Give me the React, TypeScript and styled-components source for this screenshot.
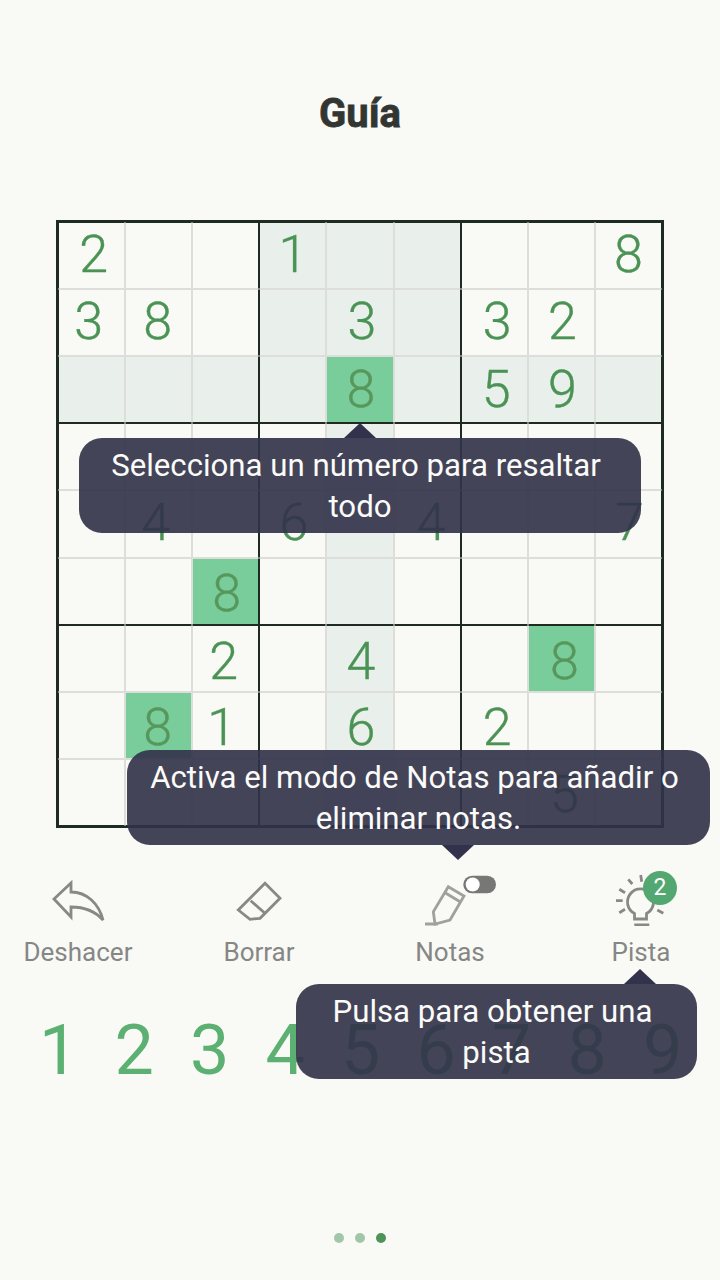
import React from "react";
import styled, { createGlobalStyle } from "styled-components";

const GlobalStyle = createGlobalStyle`
    html, body {
        margin: 0;
        padding: 0;
        background: #f9faf5;
        font-family: Roboto, "Liberation Sans", sans-serif;
    }
`;

const Page = styled.div`
    position: relative;
    width: 720px;
    height: 1280px;
    overflow: hidden;
    background: #f9faf5;
`;

const Title = styled.h1`
    margin: 0;
    padding-top: 90px;
    height: 130px;
    line-height: 48px;
    font-size: 40px;
    font-weight: 700;
    text-align: center;
    color: #333533;
    -webkit-text-stroke: 0.8px #333533;
`;

const Board = styled.div`
    box-sizing: border-box;
    width: 608px;
    height: 608px;
    margin: 0 auto;
    border: 2px solid #1f2b22;
    display: grid;
    grid-template-columns: repeat(9, 1fr);
    grid-template-rows: repeat(9, 1fr);
`;

const line = "#dddeda";
const heavy = "#1f2b22";

const Cell = styled.div<{ $row: number; $col: number; $tone: string; $dx: number; $dy: number }>`
    box-sizing: border-box;
    display: flex;
    align-items: center;
    justify-content: center;
    padding: ${(p) => Math.max(p.$dy, 0) * 2}px ${(p) => Math.max(-p.$dx, 0) * 2}px
        ${(p) => Math.max(-p.$dy, 0) * 2}px ${(p) => Math.max(p.$dx, 0) * 2}px;
    font-size: 52px;
    font-weight: 300;
    line-height: 1;
    -webkit-text-stroke: 0.4px currentColor;
    color: ${(p) => (p.$tone === "active" ? "#57975c" : "#4a9355")};
    background: ${(p) =>
        p.$tone === "active" ? "#79cd9b" : p.$tone === "soft" ? "#e9efeb" : "transparent"};
    border-left: 1px solid ${(p) => (p.$col % 3 === 0 ? heavy : line)};
    border-right: 1px solid ${(p) => (p.$col % 3 === 2 ? heavy : line)};
    border-top: 1px solid ${(p) => (p.$row % 3 === 0 ? heavy : line)};
    border-bottom: 1px solid ${(p) => (p.$row % 3 === 2 ? heavy : line)};
`;

const Toolbar = styled.div`
    display: flex;
    padding: 46px 0 0 23px;
`;

const Tool = styled.div<{ $gap: number }>`
    position: relative;
    width: 110px;
    margin-left: ${(p) => p.$gap}px;
    display: flex;
    flex-direction: column;
    align-items: center;
`;

const ToolIcon = styled.svg`
    display: block;
    width: 110px;
    height: 52px;
    fill: none;
    stroke: #888987;
    stroke-width: 2.8;
    stroke-linejoin: miter;
`;

const ToolLabel = styled.span`
    margin-top: 11px;
    margin-bottom: 1px;
    line-height: 30px;
    font-size: 26px;
    color: #868785;
`;

const Badge = styled.span`
    position: absolute;
    left: 57px;
    top: -3px;
    width: 34px;
    height: 34px;
    border-radius: 50%;
    background: #52a870;
    color: #fff;
    font-size: 23px;
    line-height: 34px;
    text-align: center;
`;

const Numpad = styled.div`
    display: grid;
    grid-template-columns: repeat(9, 75.5px);
    padding: 40px 0 0 21px;
`;

const Key = styled.span`
    text-align: center;
    font-size: 70px;
    line-height: 84px;
    color: #5cb072;
`;

const Dots = styled.div`
    display: flex;
    justify-content: center;
    gap: 11px;
    margin-top: 141px;
`;

const Dot = styled.span<{ $on?: boolean }>`
    width: 10px;
    height: 10px;
    border-radius: 50%;
    background: ${(p) => (p.$on ? "#4d9458" : "#a2c7a8")};
`;

const Tip = styled.div<{ $left: number; $top: number; $width: number }>`
    position: absolute;
    box-sizing: border-box;
    left: ${(p) => p.$left}px;
    top: ${(p) => p.$top}px;
    width: ${(p) => p.$width}px;
    height: 95px;
    padding: 7px 0 0;
    border-radius: 23px;
    background: rgba(50, 50, 74, 0.91);
    color: #fbfbf8;
    font-size: 31.2px;
    line-height: 41px;
    text-align: center;
`;

// the first line keeps its trailing space when centred, so it sits a little to the left
const TipLine = styled.span<{ $first?: boolean }>`
    display: block;
    padding-right: ${(p) => (p.$first ? 8 : 0)}px;
`;

const Arrow = styled.span<{ $x: number; $down?: boolean }>`
    position: absolute;
    left: ${(p) => p.$x - 16}px;
    ${(p) => (p.$down ? "top: 95px;" : "top: -15px;")}
    width: 32px;
    height: 15px;
    background: #32324c;
    clip-path: ${(p) =>
        p.$down ? "polygon(0 0, 100% 0, 50% 100%)" : "polygon(50% 0, 100% 100%, 0 100%)"};
`;

const cells = [
    "2  1    8",
    "38  3 32 ",
    "    8 59 ",
    "         ",
    " 4 6 4  7",
    "  8      ",
    "  2 4  8 ",
    " 81 6 2  ",
    "       5 ",
];

const active = ["2-4", "5-2", "6-7", "7-1"];

// the digits in the game aren't quite centred in their cells
const rowOffsets = [-1, -1, 0, 0, -1, 3, 4, 3, 3];
const nudges: Record<string, number> = {
    "0-0": 2,
    "1-0": -3,
    "1-1": -1,
    "1-4": 2,
    "1-6": 3,
    "1-7": 1,
    "2-4": 1,
    "2-6": 2,
    "2-7": 1,
    "4-1": -3,
    "4-3": 1,
    "4-5": 4,
    "4-8": 1,
    "5-2": 1,
    "6-2": -2,
    "6-4": 1,
    "6-7": 3,
    "7-1": -1,
    "7-2": -4,
    "7-4": 1,
    "7-6": 3,
    "8-7": 3,
};

const toneOf = (row: number, col: number) => {
    if (active.includes(`${row}-${col}`)) return "active";
    if (row === 2 || col === 4) return "soft";
    if (row < 3 && col >= 3 && col < 6) return "soft";
    return "plain";
};

const App = () => {
    return (
        <Page>
            <GlobalStyle />
            <Title>Guía</Title>
            <Board>
                {cells.map((text, row) =>
                    text.split("").map((value, col) => (
                        <Cell
                            key={`${row}-${col}`}
                            $row={row}
                            $col={col}
                            $tone={toneOf(row, col)}
                            $dx={nudges[`${row}-${col}`] ?? 0}
                            $dy={rowOffsets[row]}
                        >
                            {value.trim()}
                        </Cell>
                    ))
                )}
            </Board>
            <Toolbar>
                <Tool $gap={0}>
                    <ToolIcon viewBox="0 0 110 52">
                        <path d="M31 25 L48 9 V18 C64 18 76 30 80 46 C72 37 62 33 48 33 V43 Z" />
                    </ToolIcon>
                    <ToolLabel>Deshacer</ToolLabel>
                </Tool>
                <Tool $gap={71}>
                    <ToolIcon viewBox="0 0 110 52">
                        <path d="M61 9.3 L76 24.3 L56 44.3 L46 45.3 L34.3 36 Z" />
                        <path d="M46.7 26.7 L61 39.3" />
                    </ToolIcon>
                    <ToolLabel>Borrar</ToolLabel>
                </Tool>
                <Tool $gap={81}>
                    <ToolIcon viewBox="0 0 110 52">
                        <path d="M53.3 12.7 L69 22 L55 46 L40 50 L38.3 37.7 Z" stroke="#a0a19e" />
                        <path d="M49.3 18.3 L65 27.7 M30 50 H43" stroke="#a0a19e" />
                        <rect x="68.3" y="1.7" width="32.7" height="17.6" rx="8.8" fill="#777876" stroke="none" />
                        <circle cx="77.7" cy="10.5" r="7" fill="#fff" stroke="none" />
                    </ToolIcon>
                    <ToolLabel>Notas</ToolLabel>
                </Tool>
                <Tool $gap={81}>
                    <ToolIcon viewBox="0 0 110 52">
                        <path d="M48.5 45 V39.5 A13 13 0 1 1 60.5 39.5 V45 Z" />
                        <path d="M48.3 51 H63.3 M30 26.7 H36.7 M33.3 38.7 L39 35.3 M33.3 15.3 L39 18.7 M42.3 5.3 L46.3 10 M54.7 1 L55.7 7.7 M71.3 36 L77.3 39.3" />
                    </ToolIcon>
                    <Badge>2</Badge>
                    <ToolLabel>Pista</ToolLabel>
                </Tool>
            </Toolbar>
            <Numpad>
                {[1, 2, 3, 4, 5, 6, 7, 8, 9].map((n) => (
                    <Key key={n}>{n}</Key>
                ))}
            </Numpad>
            <Dots>
                <Dot />
                <Dot />
                <Dot $on />
            </Dots>
            <Tip $left={79} $top={438} $width={562}>
                <Arrow $x={281} />
                <TipLine $first>Selecciona un número para resaltar</TipLine>
                <TipLine>todo</TipLine>
            </Tip>
            <Tip $left={127} $top={750} $width={583}>
                <Arrow $x={331} $down />
                <TipLine $first>Activa el modo de Notas para añadir o</TipLine>
                <TipLine>eliminar notas.</TipLine>
            </Tip>
            <Tip $left={296} $top={984} $width={401}>
                <Arrow $x={344} />
                <TipLine $first>Pulsa para obtener una</TipLine>
                <TipLine>pista</TipLine>
            </Tip>
        </Page>
    );
};

export default App;
